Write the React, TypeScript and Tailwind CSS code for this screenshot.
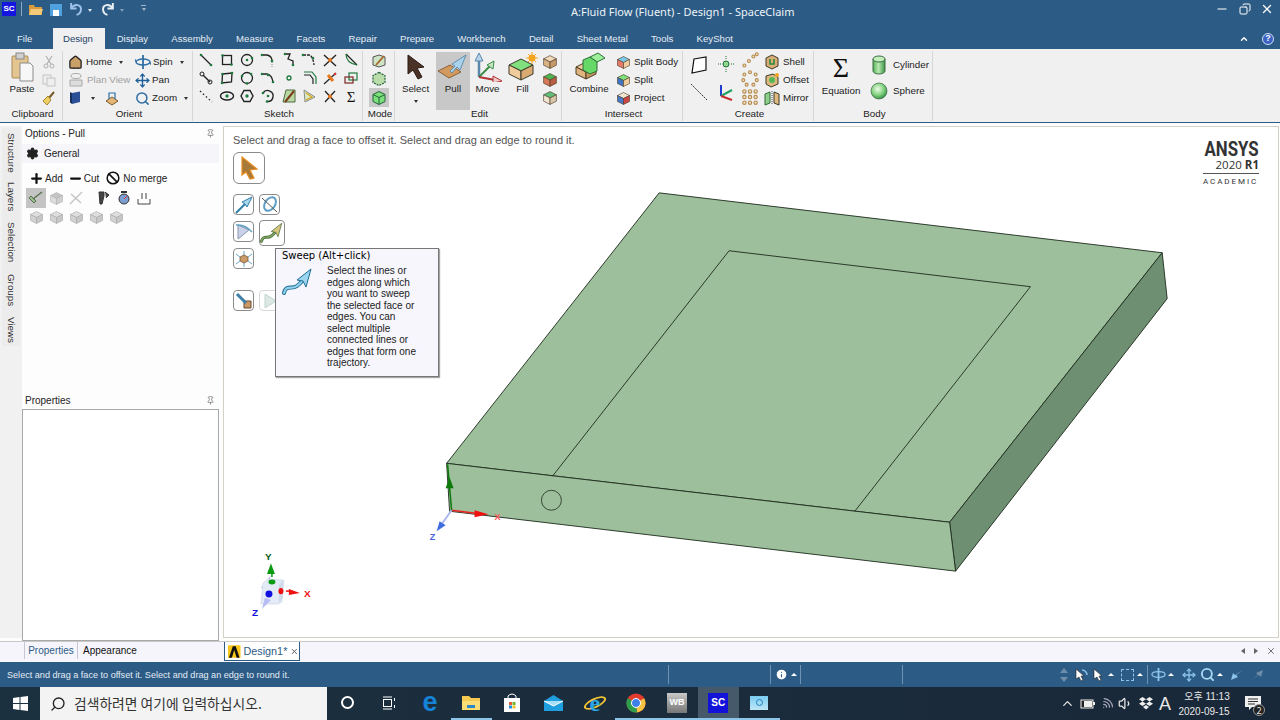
import React from 'react';
import { Search, ChevronUp, Volume1, Wifi, X, Copy, Minus, Pin, House, Move, Settings, Plus, Ban, Info } from 'lucide-react';

const tabs = ['File', 'Design', 'Display', 'Assembly', 'Measure', 'Facets', 'Repair', 'Prepare', 'Workbench', 'Detail', 'Sheet Metal', 'Tools', 'KeyShot'];

function Ico({ children, size = 16, className = '' }: { children: React.ReactNode; size?: number; className?: string }) {
  return (
    <svg width={size} height={size} viewBox="0 0 16 16" fill="none" className={'shrink-0 ' + className}>
      {children}
    </svg>
  );
}

function Dot({ x, y, c = '#1f7a3c', r = 1.3 }: { x: number; y: number; c?: string; r?: number }) {
  return <circle cx={x} cy={y} r={r} fill={c} />;
}

const K = '#222';

// sketch tool glyphs, row by row
const sketchIcons: React.ReactNode[] = [
  <><path d="M3 3L13 13" stroke={K} strokeWidth="1.3" /><Dot x={3} y={3} /><Dot x={13} y={13} /></>,
  <><rect x="3.5" y="3.5" width="9" height="9" stroke={K} strokeWidth="1.3" /><Dot x={3.5} y={3.5} /><Dot x={12.5} y={12.5} /></>,
  <><circle cx="8" cy="8" r="5.5" stroke={K} strokeWidth="1.3" /><Dot x={8} y={8} /><Dot x={13} y={6} /></>,
  <><path d="M2 3H7Q12 4 12 9" stroke={K} strokeWidth="1.3" /><path d="M12 10V15" stroke="#888" strokeDasharray="1 1" /><Dot x={2} y={3} /><Dot x={12} y={9} /></>,
  <><path d="M4 2H9L7 7L12 9V14" stroke={K} strokeWidth="1.3" /><Dot x={4} y={2} /><Dot x={12} y={13} /></>,
  <><path d="M2 3H8Q12 4 13 13" stroke={K} strokeWidth="1.3" strokeDasharray="3 1" /><Dot x={2} y={3} /><Dot x={12} y={6} /></>,
  <><path d="M2 3L14 14M14 3L2 14" stroke={K} strokeWidth="1.4" /><Dot x={8} y={8} c="#e8761c" r={2} /></>,
  <><path d="M3 2L14 13" stroke={K} strokeWidth="1.2" /><path d="M3 2Q3 11 14 13" stroke="#1f7a3c" strokeWidth="1.2" /></>,
  <><path d="M5 5L12 12" stroke={K} strokeWidth="1.4" /><circle cx="4" cy="4" r="2" stroke={K} /><circle cx="12" cy="12" r="2" stroke={K} /></>,
  <><path d="M3.5 4L13 3L12.5 12L3 13Z" stroke={K} strokeWidth="1.3" /><Dot x={3.5} y={4} /><Dot x={13} y={3} /><Dot x={3} y={13} /></>,
  <><circle cx="8" cy="8" r="5.5" stroke={K} strokeWidth="1.3" /><Dot x={3} y={6} /><Dot x={12} y={4} /><Dot x={8} y={13.5} /></>,
  <><path d="M2 4H7Q12 5 13 12" stroke={K} strokeWidth="1.3" /><Dot x={2} y={4} /><Dot x={8} y={5} /><Dot x={13} y={12} /></>,
  <><circle cx="8" cy="8" r="2" stroke="#1f7a3c" strokeWidth="1.3" /></>,
  <><path d="M3 5H9L12 9V14" stroke={K} strokeWidth="1.2" /><path d="M3 2H11L15 7V14" stroke="#1f7a3c" strokeWidth="1.2" /></>,
  <><path d="M2 14L14 3" stroke={K} strokeWidth="1.2" /><path d="M6 5L11 11" stroke="#e8761c" strokeWidth="3" /><Dot x={13} y={4} c="#d33" /></>,
  <><rect x="6" y="3" width="8" height="7" stroke="#1f7a3c" strokeWidth="1.2" /><rect x="2" y="7" width="8" height="6" stroke="#7a2424" strokeWidth="1.2" /></>,
  <><path d="M2 3L14 14" stroke={K} strokeWidth="1.3" strokeDasharray="1.5 2.5" /></>,
  <><ellipse cx="8" cy="8" rx="6.5" ry="4" stroke={K} strokeWidth="1.4" /><Dot x={8} y={8} r={1.7} /></>,
  <><path d="M5 2.5H11L14 8L11 13.5H5L2 8Z" stroke={K} strokeWidth="1.4" /><Dot x={8} y={8} r={1.7} /></>,
  <><path d="M3 5A5.5 5.5 0 1 1 7 13.5" stroke={K} strokeWidth="1.4" /><Dot x={8} y={8} /><Dot x={3} y={5} /><Dot x={7} y={13.5} /></>,
  <><path d="M2 14L5 2H14V14Z" fill="#b9d7a5" stroke="#4c6b3c" /><path d="M4 14L13 3" stroke="#7a3b1a" strokeWidth="2" /></>,
  <><path d="M3 2L14 9L4 14Z" fill="#d7e9c0" stroke="#8a8a8a" /><path d="M5 5L11 9L5 12" stroke="#d6a51f" strokeWidth="1.2" /></>,
  <><path d="M3 3L13 14M13 3L3 14" stroke={K} strokeWidth="1.3" /><Dot x={8} y={8.5} c="#e8761c" r={2} /></>,
  <text x="8" y="13.5" textAnchor="middle" fontSize="15" fontFamily="Liberation Serif, serif" fill="#111">Σ</text>,
];

function Cube({ top = '#8de08a', left = '#d9b384', right = '#c69a68', size = 20, line = '#4b3a25' }: { top?: string; left?: string; right?: string; size?: number; line?: string }) {
  return (
    <svg width={size} height={size} viewBox="0 0 20 20" className="shrink-0">
      <path d="M10 2L18 6L10 10L2 6Z" fill={top} stroke={line} strokeWidth="0.8" />
      <path d="M2 6L10 10V18L2 14Z" fill={left} stroke={line} strokeWidth="0.8" />
      <path d="M18 6L10 10V18L18 14Z" fill={right} stroke={line} strokeWidth="0.8" />
    </svg>
  );
}

function Group({ w, label, children }: { w: string; label: string; children: React.ReactNode }) {
  return (
    <div className={'flex h-[70px] shrink-0 flex-col border-r border-[#d6d6d6] ' + w}>
      <div className="flex h-[56px] flex-1 items-start">{children}</div>
      <div className="h-[14px] pl-[3px] text-center leading-[14px]">{label}</div>
    </div>
  );
}

function SmallBtn({ icon, label, muted, caret }: { icon: React.ReactNode; label?: string; muted?: boolean; caret?: boolean }) {
  return (
    <div className={'flex h-[18px] items-center gap-[3px] whitespace-nowrap ' + (muted ? 'text-[#a0a0a0]' : '')}>
      {icon}
      {label && <span>{label}</span>}
      {caret && <span className="ml-[4px] h-0 w-0 border-x-[2.5px] border-t-[3px] border-x-transparent border-t-[#333]" />}
    </div>
  );
}

function BigBtn({ icon, label, w, active, caret }: { icon: React.ReactNode; label: string; w: string; active?: boolean; caret?: boolean }) {
  return (
    <div className={'mt-[1px] flex h-[58px] flex-col items-center pt-[1px] ' + w + (active ? ' bg-[#c8c8c8]' : '')}>
      <div className="flex h-[27px] items-center">{icon}</div>
      <div className="mt-[2px] leading-[14px]">{label}</div>
      {caret && <span className="mt-[4px] h-0 w-0 border-x-[2.5px] border-t-[3px] border-x-transparent border-t-[#333]" />}
    </div>
  );
}

function PullArrow({ size = 32 }: { size?: number }) {
  return (
    <svg width={size} height={size} viewBox="0 0 32 32" className="shrink-0">
      <path d="M1 20L13 14L24 21L12 27Z" fill="#d29a5f" stroke="#7a4c22" strokeWidth="0.8" />
      <path d="M13 20L18 15L15 13L29 4L23 19L20 16L15 22Z" fill="#a9d3ec" stroke="#4d7f9f" strokeWidth="0.8" />
    </svg>
  );
}

function Ribbon() {
  return (
    <div className="flex h-[73px] items-start bg-[#f0f0f0] pt-[2px] text-[9.8px] text-[#222] [font-family:'Liberation_Sans',sans-serif]">
      <Group w="w-[63px]" label="Clipboard">
        <BigBtn
          w="w-[44px]"
          label="Paste"
          icon={
            <svg width="24" height="30" viewBox="0 0 24 30">
              <rect x="2" y="4" width="16" height="22" rx="1" fill="#e3c590" stroke="#a98a57" />
              <rect x="6" y="1" width="8" height="6" fill="#cfcfcf" stroke="#888" />
              <path d="M10 11H20L23 14V29H10Z" fill="#f7f7f7" stroke="#8b8b8b" />
            </svg>
          }
        />
        <div className="-ml-[3px] flex flex-col items-center gap-[2px] pt-[3px]">
          <Ico><path d="M5 2L10 10M11 2L6 10" stroke="#b0b0b0" strokeWidth="1.2" /><circle cx="5" cy="12" r="2" stroke="#b0b0b0" /><circle cx="11" cy="12" r="2" stroke="#b0b0b0" /></Ico>
          <Ico><rect x="2" y="3" width="8" height="9" fill="#eee" stroke="#c4c4c4" /><rect x="6" y="6" width="8" height="8" fill="#eee" stroke="#c4c4c4" /></Ico>
          <Ico><path d="M13 2L8 8" stroke="#7a5a2b" strokeWidth="2" /><path d="M2 11L7 6L10 10L6 15Z" fill="#efcf63" stroke="#a5862d" /></Ico>
        </div>
      </Group>
      <Group w="w-[130px]" label="Orient">
        <div className="flex w-[72px] flex-col pl-[5px] pt-[2px]">
          <SmallBtn icon={<House size={15} fill="#c9a068" stroke="#1c1c1c" />} label="Home" caret />
          <SmallBtn muted icon={<Ico><ellipse cx="8" cy="4" rx="5" ry="2.5" stroke="#aaa" /><path d="M2 8H14V14H2Z" fill="#ddd" stroke="#aaa" /></Ico>} label="Plan View" />
          <div className="flex h-[18px] items-center gap-[9px]">
            <Ico><path d="M4 3L12 1.5V12L4 14Z" fill="#2b4f96" /><path d="M4 3L2 2V12.5L4 14Z" fill="#16305f" /></Ico>
            <span className="-ml-[2px] h-0 w-0 border-x-[2.5px] border-t-[3px] border-x-transparent border-t-[#333]" />
            <Ico><path d="M2 11L8 7L14 11L8 15Z" fill="#e5b778" stroke="#7a5a2b" /><path d="M5 9V3H11V9" stroke="#2b6ea8" strokeWidth="1.2" /></Ico>
          </div>
        </div>
        <div className="flex flex-col pt-[2px] [&_span:first-of-type]:-ml-[1px]">
          <SmallBtn
            icon={<Ico><ellipse cx="8" cy="8" rx="7" ry="3" stroke="#2f6ea5" strokeWidth="1.4" /><path d="M8 1V15" stroke="#2f6ea5" strokeWidth="1.8" /><path d="M1 8L0 5M15 8L16 11" stroke="#2f6ea5" /></Ico>}
            label="Spin"
            caret
          />
          <SmallBtn icon={<Move size={15} stroke="#1f5f99" strokeWidth={2.2} />} label="Pan" />
          <SmallBtn icon={<Search size={15} stroke="#2f6ea5" strokeWidth={2.4} />} label="Zoom" caret />
        </div>
      </Group>
      <Group w="w-[170px]" label="Sketch">
        <div className="grid grid-cols-8 gap-x-[4.7px] gap-y-[2px] pl-[5px] pt-[1px]">
          {sketchIcons.map((g, i) => (
            <Ico key={i}>{g}</Ico>
          ))}
        </div>
      </Group>
      <Group w="w-[32px]" label="Mode">
        <div className="flex w-full flex-col items-center pt-[1px]">
          <div className="flex h-[18px] items-center">
            <Ico><path d="M2 4L8 2L14 4V12L8 14L2 12Z" fill="#cfe3c5" stroke="#555" /><path d="M5 12L13 3" stroke="#a8642a" strokeWidth="1.8" /></Ico>
          </div>
          <div className="flex h-[18px] items-center">
            <Ico><path d="M8 1.5L14 4.5V11.5L8 14.5L2 11.5V4.5Z" fill="#b9dca8" stroke="#23603a" strokeWidth="1.2" strokeDasharray="2 1" /></Ico>
          </div>
          <div className="flex h-[19px] w-[20px] items-center justify-center bg-[#c8c8c8]">
            <Ico><path d="M8 1.5L14 4.5V11.5L8 14.5L2 11.5V4.5Z" fill="#7be07a" stroke="#23603a" /><path d="M2 4.5L8 7.5L14 4.5M8 7.5V14.5" stroke="#23603a" /></Ico>
          </div>
        </div>
      </Group>
      <Group w="w-[167px]" label="Edit">
        <div className="flex items-start">
          <BigBtn
            w="w-[41px]"
            label="Select"
            caret
            icon={
              <svg width="22" height="26" viewBox="0 0 22 26">
                <path d="M3 1L19 13L12 14L17 23L13 25L8 16L3 20Z" fill="#4a3226" stroke="#2a1a12" />
              </svg>
            }
          />
          <BigBtn w="w-[34px]" active label="Pull" icon={<PullArrow />} />
          <BigBtn
            w="w-[35px]"
            label="Move"
            icon={
              <svg width="30" height="30" viewBox="0 0 30 30">
                <path d="M6 25V8" stroke="#5b87ad" strokeWidth="2.5" /><path d="M6 1L10 9H2Z" fill="#b7d4ea" stroke="#5b87ad" />
                <path d="M6 25L18 13" stroke="#3a8c46" strokeWidth="2" /><path d="M21 9L20 17L14 13Z" fill="#c7e6c2" stroke="#3a8c46" />
                <path d="M6 25L22 28" stroke="#b03434" strokeWidth="2" /><path d="M29 29L20 31L20 24Z" fill="#f0c8c8" stroke="#b03434" />
              </svg>
            }
          />
          <BigBtn
            w="w-[35px]"
            label="Fill"
            icon={
              <svg width="32" height="30" viewBox="0 0 32 30">
                <path d="M14 7L26 13L14 19L2 13Z" fill="#7fe07d" stroke="#3b3b2a" />
                <path d="M2 13L14 19V28L2 22Z" fill="#f0cc9c" stroke="#3b3b2a" />
                <path d="M26 13L14 19V28L26 22Z" fill="#d9ab72" stroke="#3b3b2a" />
                <circle cx="25" cy="6" r="3.5" fill="#f3a522" />
                <path d="M25 0V12M19 6H31M21 2L29 10M29 2L21 10" stroke="#f3a522" />
              </svg>
            }
          />
          <div className="flex flex-col gap-[2px] pl-[2px] pt-[3px]">
            <Cube size={16} top="#f0d8b8" />
            <Cube size={16} top="#4fb44f" left="#d77a5a" right="#b95f45" />
            <Cube size={16} top="#5fbf7a" left="#f2e6d2" right="#d8c6a8" />
          </div>
        </div>
      </Group>
      <Group w="w-[121px]" label="Intersect">
        <BigBtn
          w="w-[54px]"
          label="Combine"
          icon={
            <svg width="34" height="30" viewBox="0 0 34 30">
              <path d="M4 15L14 10L24 15L14 20Z" fill="#f0cc9c" stroke="#4b3a25" />
              <path d="M4 15V22L14 27V20Z" fill="#e0b47e" stroke="#4b3a25" />
              <path d="M24 15V22L14 27V20Z" fill="#c7975f" stroke="#4b3a25" />
              <path d="M18 5L26 1L33 6L25 10Z" fill="#9cf09a" stroke="#2f6d3a" />
              <path d="M11 8L18 5L25 10V19L18 22L11 18Z" fill="#66d868" stroke="#2f6d3a" />
            </svg>
          }
        />
        <div className="flex flex-col pt-[2px]">
          <SmallBtn icon={<Cube size={15} top="#7cc7e8" left="#e57a6a" right="#f0cc9c" />} label="Split Body" />
          <SmallBtn icon={<Cube size={15} top="#7de07a" left="#3f74c4" right="#f0cc9c" />} label="Split" />
          <SmallBtn icon={<Cube size={15} top="#f2e6d2" left="#4a7ac7" right="#c44" />} label="Project" />
        </div>
      </Group>
      <Group w="w-[131px]" label="Create">
        <div className="flex flex-col gap-[9px] pl-[7px] pt-[5px]">
          <svg width="18" height="18" viewBox="0 0 18 18"><path d="M4 3L16 1V14L2 17Z" fill="#fff" stroke="#111" strokeWidth="1.2" /></svg>
          <svg width="18" height="18" viewBox="0 0 18 18"><path d="M1 1L17 17" stroke="#333" strokeDasharray="2 1" /></svg>
        </div>
        <div className="flex flex-col gap-[10px] pl-[9px] pt-[4px]">
          <svg width="18" height="18" viewBox="0 0 18 18"><circle cx="9" cy="9" r="3" fill="#8dd68a" stroke="#1f6d3a" /><path d="M9 1V4M9 14V17M1 9H4M14 9H17" stroke="#1f6d3a" strokeDasharray="1 1" /></svg>
          <svg width="18" height="18" viewBox="0 0 18 18"><path d="M4 13V2" stroke="#1d3fd0" strokeWidth="2" /><path d="M4 13L15 7" stroke="#1fa060" strokeWidth="2" /><path d="M4 13L15 17" stroke="#c92c2c" strokeWidth="2" /></svg>
        </div>
        <div className="flex flex-col pl-[6px] pt-[1px]">
          <Ico size={18}>
            {[[3, 12], [7, 8], [11, 4], [14, 2]].map(([x, y]) => <circle key={x} cx={x} cy={y} r="1.3" stroke="#b58b4f" fill="#f0e0c0" />)}
          </Ico>
          <Ico size={18}>
            {[[8, 2], [13, 4], [14, 9], [11, 13], [5, 13], [2, 9], [3, 4]].map(([x, y]) => <circle key={x * 10 + y} cx={x} cy={y} r="1.3" stroke="#b58b4f" fill="#f0e0c0" />)}
          </Ico>
          <Ico size={18}>
            {[3, 8, 13].flatMap((y) => [3, 8, 13].map((x) => <circle key={x * 10 + y} cx={x} cy={y} r="1.5" stroke="#b58b4f" fill="#f0e0c0" />))}
          </Ico>
        </div>
        <div className="flex flex-col pl-[5px] pt-[2px]">
          <SmallBtn icon={<Ico><path d="M8 1L14 4V12L8 15L2 12V4Z" fill="#d8ae74" stroke="#3a3a2a" /><path d="M6 5V10H10V5" stroke="#2f8a3f" strokeWidth="1.6" /></Ico>} label="Shell" />
          <SmallBtn icon={<Ico><path d="M2 4L9 2L14 5V12L7 15L2 12Z" fill="#e0b97f" stroke="#3a3a2a" /><circle cx="8" cy="8" r="3" fill="#54b85a" /><circle cx="13" cy="3" r="2" fill="#f3a522" /></Ico>} label="Offset" />
          <SmallBtn icon={<Ico><path d="M1 4L6 2V13L1 15Z" fill="#8fcf8a" stroke="#2f6d3a" /><path d="M15 4L10 2V13L15 15Z" fill="#e0b97f" stroke="#3a3a2a" /><path d="M8 1V15" stroke="#444" strokeDasharray="1 1" /></Ico>} label="Mirror" />
        </div>
      </Group>
      <Group w="w-[119px]" label="Body">
        <div className="flex w-[54px] flex-col items-center">
          <div className="flex h-[33px] items-center font-['Liberation_Serif',serif] text-[28px] leading-none text-[#111]">Σ</div>
          <div className="leading-[14px]">Equation</div>
        </div>
        <div className="flex flex-col gap-[6px] pl-[2px] pt-[4px]">
          <div className="flex h-[20px] items-center gap-[5px]">
            <svg width="18" height="20" viewBox="0 0 18 20">
              <defs><linearGradient id="cyl" x1="0" x2="1" y1="0" y2="0"><stop offset="0" stopColor="#4fae55" /><stop offset="0.45" stopColor="#b8eab0" /><stop offset="1" stopColor="#3f9347" /></linearGradient></defs>
              <path d="M3 4V16A6 3 0 0 0 15 16V4Z" fill="url(#cyl)" stroke="#3d6b45" />
              <ellipse cx="9" cy="4" rx="6" ry="3" fill="#c3efbb" stroke="#3d6b45" />
            </svg>
            <span>Cylinder</span>
          </div>
          <div className="flex h-[20px] items-center gap-[5px]">
            <svg width="18" height="20" viewBox="0 0 18 20">
              <defs><radialGradient id="sph" cx="0.42" cy="0.38" r="0.65"><stop offset="0" stopColor="#eefbe8" /><stop offset="0.6" stopColor="#7fd07c" /><stop offset="1" stopColor="#2f8a3f" /></radialGradient></defs>
              <circle cx="9" cy="10" r="8" fill="url(#sph)" stroke="#3d6b45" strokeWidth="0.7" />
            </svg>
            <span>Sphere</span>
          </div>
        </div>
      </Group>
    </div>
  );
}

function GuideBtn({ children, className = 'h-[21px] w-[21px]' }: { children: React.ReactNode; className?: string }) {
  return <div className={'flex items-center justify-center rounded-[4px] border border-[#8b8b8b] bg-white ' + className}>{children}</div>;
}

function BlueArrow({ size = 18, fill = '#a9d8ee', stroke = '#2f7ea8' }: { size?: number; fill?: string; stroke?: string }) {
  return (
    <svg width={size} height={size} viewBox="0 0 18 18">
      <path d="M1 17L10 8" stroke={stroke} strokeWidth="2" />
      <path d="M17 1L12 11L10 8L7 6Z" fill={fill} stroke={stroke} />
    </svg>
  );
}

function SweepIcon({ size = 24, body = '#7aa35f', head = '#d9c780', line = '#4a6a3a' }: { size?: number; body?: string; head?: string; line?: string }) {
  return (
    <svg width={size} height={size} viewBox="0 0 32 32">
      <path d="M2 27C4 18 10 24 15 20C19 17 19 16 21 14" fill="none" stroke={line} strokeWidth="4" strokeLinecap="round" />
      <path d="M2 27C4 18 10 24 15 20C19 17 19 16 21 14" fill="none" stroke={body} strokeWidth="2.2" strokeLinecap="round" />
      <path d="M29 3L24 21L21 15L15 14Z" fill={head} stroke={line} />
    </svg>
  );
}

function Model() {
  // free canvas: coordinates are the screen ones
  return (
    <svg viewBox="224 126 1054 511" className="absolute inset-0 h-full w-full">
      <polygon points="659,192 1163,252 950,522 446,463" fill="#9dbf9b" stroke="#1d2b1d" strokeWidth="0.9" />
      <polygon points="1163,252 1168,298 956,571 950,522" fill="#6e8f71" stroke="#1d2b1d" strokeWidth="0.9" />
      <polygon points="446,463 950,522 956,571 449,511" fill="#9dbf9b" stroke="#1d2b1d" strokeWidth="0.9" />
      <polyline points="552,476 729,250 1031,286 855,511" fill="none" stroke="#1d2b1d" strokeWidth="0.9" />
      <circle cx="551" cy="500" r="10" fill="none" stroke="#1d2b1d" strokeWidth="0.8" />
      <path d="M447 464L451 510" stroke="#0b7a0b" strokeWidth="1.5" />
      <path d="M449 477L445 488H453Z" fill="#0b7a0b" />
      <path d="M451 510L475 513" stroke="#e22" strokeWidth="1.5" />
      <path d="M488 514L474 510V517Z" fill="#e11" />
      <text x="494" y="520" fontSize="9" fill="#f55" fontFamily="Liberation Sans, sans-serif" fontWeight="700">X</text>
      <path d="M451 510L441 524" stroke="#a9b8f0" strokeWidth="2" />
      <path d="M436 531L439 521L445 525Z" fill="#3f6de0" />
      <text x="429" y="540" fontSize="9" fill="#4a63d8" fontFamily="Liberation Sans, sans-serif" fontWeight="700">Z</text>

      <path d="M270 575L260 588H267Z" fill="#b8bcf5" />
      <path d="M270 563L266 574H274Z" fill="#0a9a10" />
      <path d="M271 572V577" stroke="#0a9a10" strokeWidth="1.5" />
      <path d="M260 604L262 583L267 579L283 580L281 602L277 604Z" fill="#e2ebf6" stroke="#c9d4e6" strokeWidth="0.6" />
      <path d="M278 585L282 580V598L278 603Z" fill="#cfdaea" />
      <path d="M261 609L270 600L264 598Z" fill="#b8bcf5" />
      <ellipse cx="271" cy="582" rx="3.5" ry="2.5" fill="#0a9a10" />
      <circle cx="268" cy="594" r="3.5" fill="#1010e0" />
      <ellipse cx="280" cy="591" rx="2.5" ry="3.2" fill="#ee1111" />
      <path d="M285 591H290" stroke="#e11" strokeWidth="1.5" />
      <path d="M299 593L288 589V595Z" fill="#e11" />
      <text x="303" y="597" fontSize="10" fill="#e11" fontFamily="Liberation Sans, sans-serif" fontWeight="700">X</text>
      <text x="264" y="560" fontSize="10" fill="#065c14" fontFamily="Liberation Sans, sans-serif" fontWeight="700">Y</text>
      <text x="251" y="616" fontSize="10" fill="#1010e0" fontFamily="Liberation Sans, sans-serif" fontWeight="700">Z</text>
    </svg>
  );
}

function Canvas() {
  return (
    <div className="relative flex-1 border border-[#d5d0c4] bg-white">
      <Model />
      <div className="relative pl-[9px] pt-[5px] text-[11px] text-[#555] [font-family:'Liberation_Sans',sans-serif]">
        Select and drag a face to offset it. Select and drag an edge to round it.
      </div>
      {/* tool guides */}
      <div className="absolute left-[9px] top-[25px] flex flex-col">
        <GuideBtn className="h-[32px] w-[32px] rounded-[6px]">
          <svg width="22" height="24" viewBox="0 0 22 24">
            <path d="M4 1L19 13L12 14L16 22L12 23L8 16L4 19Z" fill="#a87a3a" stroke="#e78c1f" strokeWidth="1.2" />
          </svg>
        </GuideBtn>
        <div className="mt-[10px] flex gap-[5px]">
          <GuideBtn><BlueArrow /></GuideBtn>
          <GuideBtn>
            <svg width="19" height="19" viewBox="0 0 19 19">
              <ellipse cx="10" cy="9" rx="5" ry="7.5" transform="rotate(35 10 9)" fill="none" stroke="#5f9fc4" strokeWidth="2" />
              <path d="M2 3L17 17" stroke="#555" />
            </svg>
          </GuideBtn>
        </div>
        <div className="mt-[6px] flex items-start gap-[5px]">
          <GuideBtn>
            <svg width="18" height="18" viewBox="0 0 18 18">
              <path d="M3 2V16L14 7Z" fill="#c9d2e8" stroke="#8a96ad" />
              <path d="M1 2Q10 1 17 9" fill="none" stroke="#5f9fc4" strokeWidth="1.5" />
            </svg>
          </GuideBtn>
          <GuideBtn className="h-[26px] w-[26px] -translate-y-[1px]"><SweepIcon /></GuideBtn>
        </div>
        <div className="mt-[1px] flex">
          <GuideBtn>
            <svg width="18" height="18" viewBox="0 0 18 18">
              <path d="M9 1V5M9 13V17M1 4L5 7M17 4L13 7M1 14L5 11M17 14L13 11" stroke="#6aa9cc" />
              <path d="M9 5L13 7V11L9 13L5 11V7Z" fill="#c99a68" stroke="#6b4b2a" strokeWidth="0.7" />
            </svg>
          </GuideBtn>
        </div>
        <div className="mt-[21px] flex gap-[5px]">
          <GuideBtn>
            <svg width="18" height="18" viewBox="0 0 18 18">
              <path d="M9 9H16V16H9Z" fill="#c99a68" stroke="#6b4b2a" />
              <path d="M2 2L11 11" stroke="#3d7fa8" strokeWidth="3" />
            </svg>
          </GuideBtn>
          <GuideBtn className="h-[21px] w-[21px] border-[#d8d8d8]">
            <svg width="14" height="16" viewBox="0 0 14 16"><path d="M2 1L13 8L2 15Z" fill="#dbe8e4" stroke="#c4d4d0" /></svg>
          </GuideBtn>
        </div>
      </div>
      {/* tooltip */}
      <div className="absolute left-[51px] top-[121px] h-[129px] w-[164px] border border-[#767676] bg-[#f6f6fc] pl-[6px] text-[#222] shadow-[1px_1px_1px_rgba(0,0,0,0.35)]">
        <div className="h-[14px] text-[10px] leading-[13px] text-black [font-family:'DejaVu_Sans',sans-serif]">Sweep (Alt+click)</div>
        <div className="flex">
          <div className="w-[45px] pt-[3px]"><SweepIcon size={32} body="#8fd0ea" head="#9bd6ee" line="#1f6d94" /></div>
          <div className="w-[90px] pt-[2px] text-[10px] leading-[11.5px] [font-family:'Liberation_Sans',sans-serif]">
            Select the lines or edges along which you want to sweep the selected face or edges. You can select multiple connected lines or edges that form one trajectory.
          </div>
        </div>
      </div>
      {/* ansys mark */}
      <div className="absolute right-[19px] top-[14px] flex w-[56px] flex-col items-end text-[#333]">
        <div className="origin-right scale-x-[0.8] text-[21px] font-bold leading-[17px] [font-family:'Roboto',sans-serif]">ANSYS</div>
        <div className="text-[11.5px] leading-[13px] [font-family:'Open_Sans',sans-serif]">2020 <span className="font-bold">R1</span></div>
        <div className="mt-[2px] w-full border-t border-[#555] pt-[3px] text-[8px] leading-[10px] tracking-[0.24em] [font-family:'Roboto',sans-serif]">ACADEMIC</div>
      </div>
    </div>
  );
}

function Sidebar() {
  const grey = '#c4c4c4';
  return (
    <div className="-mb-[3px] flex w-[197px] flex-col text-[10px] text-[#222] [font-family:'Liberation_Sans',sans-serif]">
      <div className="flex h-[15px] items-center justify-between pl-[3px] pr-[4px]">
        <span>Options - Pull</span>
        <Pin size={9} stroke="#777" />
      </div>
      <div className="mt-[3px] flex h-[19px] items-center gap-[5px] bg-[#f5f5fa] pl-[4px]">
        <Settings size={13} fill="#222" stroke="#222" />
        <span>General</span>
      </div>
      <div className="mt-[6px] flex h-[18px] items-center pl-[7px]">
        <Plus size={15} strokeWidth={3.6} stroke="#111" />
        <span className="ml-[1px]">Add</span>
        <Minus size={15} strokeWidth={3.6} stroke="#111" className="ml-[5px]" />
        <span className="ml-[1px]">Cut</span>
        <Ban size={14} strokeWidth={2.6} stroke="#111" className="ml-[7px]" />
        <span className="ml-[3px]">No merge</span>
      </div>
      <div className="mt-[1px] flex items-center pl-[4px]">
        <div className="flex h-[20px] w-[20px] items-center justify-center bg-[#c4c4c4]">
          <Ico><path d="M3 6L8 11L6 13L1 8Z" fill="#9cbd8e" stroke="#5a6f4f" /><path d="M5 9L14 2" stroke="#5a6f4f" strokeWidth="1.5" /></Ico>
        </div>
        <div className="flex w-[20px] justify-center"><Cube size={15} top={grey} left="#dcdcdc" right="#cfcfcf" line="#b0b0b0" /></div>
        <div className="flex w-[20px] justify-center"><Ico><path d="M2 14L14 2M3 4L13 13" stroke={grey} strokeWidth="1.4" /></Ico></div>
        <div className="ml-[8px] flex w-[20px] justify-center"><Ico><path d="M3 2H8V6L6 14H4ZM9 2L13 5L10 8" fill="#444" stroke="#333" /></Ico></div>
        <div className="flex w-[20px] justify-center"><Ico><circle cx="8" cy="9" r="5" fill="#7a9fd0" stroke="#333" /><path d="M5 2H11" stroke="#333" strokeWidth="2" /><path d="M8 9L11 6" stroke="#d33" /></Ico></div>
        <div className="flex w-[20px] justify-center"><Ico><path d="M2 14H14M2 9V14M14 9V14M6 3V9M10 3V9" stroke="#444" /></Ico></div>
      </div>
      <div className="flex items-center pl-[4px]">
        {[0, 1, 2, 3, 4].map((i) => (
          <div key={i} className="flex h-[19px] w-[20px] items-center justify-center">
            <Cube size={15} top="#dedede" left="#d2d2d2" right="#c6c6c6" line="#a8a8a8" />
          </div>
        ))}
      </div>
      <div className="mt-[164px] flex h-[18px] items-center justify-between pl-[3px] pr-[4px]">
        <span>Properties</span>
        <Pin size={9} stroke="#777" />
      </div>
      <div className="flex-1 border border-[#a9a9a9] bg-white" />
    </div>
  );
}

function Task({ children, active, lit }: { children: React.ReactNode; active?: boolean; lit?: boolean }) {
  return (
    <div className={'flex h-full w-[41.2px] items-center justify-center border-b-[2px] ' + (active ? 'bg-[#46596a] ' : '') + (lit ? 'border-[#8cc4ea]' : 'border-transparent')}>
      {children}
    </div>
  );
}

function Taskbar() {
  return (
    <div className="flex h-[33px] items-stretch bg-gradient-to-r from-[#1b3140] via-[#1b2c3c] to-[#192838] text-white">
      <div className="flex w-[40px] items-center justify-center">
        <svg width="15" height="15" viewBox="0 0 15 15" fill="#fff"><path d="M0 2L6.5 1V7H0ZM7.5 1L15 0V7H7.5ZM0 8H6.5V14L0 13ZM7.5 8H15V15L7.5 14Z" /></svg>
      </div>
      <div className="flex w-[287px] items-center gap-[8px] bg-[#f3f3f3] pl-[10px] text-[13.8px] text-[#333] [font-family:'Noto_Sans_CJK_KR',sans-serif]">
        <Search size={16} stroke="#222" className="-scale-x-100" />
        <span>검색하려면 여기에 입력하십시오.</span>
      </div>
      <Task><div className="h-[13px] w-[13px] rounded-full border-[2px] border-white" /></Task>
      <Task>
        <svg width="16" height="14" viewBox="0 0 16 14" fill="none" stroke="#fff"><rect x="2.5" y="3.5" width="8" height="7" /><path d="M2 1H11M2 13H11M13.5 2V5M13.5 9V12" /></svg>
      </Task>
      <Task><span className="text-[27px] font-bold leading-none text-[#1583d8] [font-family:'Liberation_Sans',sans-serif]">e</span></Task>
      <Task lit>
        <svg width="20" height="18" viewBox="0 0 20 18"><path d="M1 2H8L10 4H19V16H1Z" fill="#f3c94f" /><rect x="1" y="7" width="18" height="9" fill="#fbdc75" /><rect x="6" y="11" width="8" height="3" fill="#2f84c8" /></svg>
      </Task>
      <Task>
        <svg width="18" height="20" viewBox="0 0 18 20"><path d="M1 5H17V19H1Z" fill="#fff" /><path d="M5 6V3Q9 -1 13 3V6" fill="none" stroke="#fff" /><rect x="6" y="9" width="3" height="3" fill="#e85a2a" /><rect x="9.5" y="9" width="3" height="3" fill="#6bb82a" /><rect x="6" y="12.5" width="3" height="3" fill="#1b8fe0" /><rect x="9.5" y="12.5" width="3" height="3" fill="#f3c02a" /></svg>
      </Task>
      <Task>
        <svg width="21" height="18" viewBox="0 0 21 18"><path d="M1 7L10.5 1L20 7V17H1Z" fill="#1f9fe0" /><path d="M1 7L10.5 12L20 7" fill="#a9e0f8" stroke="#fff" /></svg>
      </Task>
      <Task>
        <span className="relative flex h-[22px] w-[22px] items-center justify-center">
          <span className="absolute h-[10px] w-[24px] -rotate-[25deg] rounded-[50%] border-[2px] border-[#f1c232]" />
          <span className="relative text-[24px] font-bold leading-none text-[#2aa6e8] [font-family:'Liberation_Serif',serif]">e</span>
        </span>
      </Task>
      <Task lit>
        <svg width="20" height="20" viewBox="0 0 20 20">
          <circle cx="10" cy="10" r="9.5" fill="#e33b2e" />
          <path d="M10 10L18.2 5.2A9.5 9.5 0 0 1 11 19.5Z" fill="#f6c342" />
          <path d="M10 10L11 19.5A9.5 9.5 0 0 1 1.8 5.2Z" fill="#2f9e4b" />
          <circle cx="10" cy="10" r="4.5" fill="#3f80e8" stroke="#fff" />
        </svg>
      </Task>
      <Task lit>
        <div className="flex h-[20px] w-[20px] items-center justify-center bg-gradient-to-b from-[#c9c9c9] to-[#777] text-[9px] font-bold text-white [font-family:'Liberation_Sans',sans-serif]">WB</div>
      </Task>
      <Task active lit>
        <div className="flex h-[20px] w-[20px] items-center justify-center bg-[#1212d8] text-[10px] font-bold text-white [font-family:'Liberation_Sans',sans-serif]">SC</div>
      </Task>
      <Task lit>
        <div className="flex h-[14px] w-[18px] items-center justify-center bg-gradient-to-b from-[#79cdf0] to-[#bfe6f6]"><div className="h-[7px] w-[7px] rounded-full border border-[#1f7fbf]" /></div>
      </Task>
      <div className="ml-auto flex items-center pr-[19px] text-[#e8e8e8]">
        <ChevronUp size={15} className="mr-[5px]" />
        <svg width="15" height="11" viewBox="0 0 15 11" className="mr-[5px]"><rect x="1" y="2" width="12" height="8" fill="#222" stroke="#eee" /><rect x="4" y="3" width="8" height="6" fill="#eee" /><rect x="13" y="4" width="2" height="3" fill="#eee" /></svg>
        <Wifi size={14} className="mr-[4px] rotate-45 text-[#aab]" />
        <Volume1 size={15} className="mr-[6px]" />
        <svg width="14" height="13" viewBox="0 0 14 13" fill="#eee" className="mr-[6px]"><path d="M3.5 0L7 2.2L3.5 4.5L0 2.2ZM10.5 0L14 2.2L10.5 4.5L7 2.2ZM3.5 4.5L7 6.8L3.5 9L0 6.8ZM10.5 4.5L14 6.8L10.5 9L7 6.8ZM7 8L10 10L7 12.5L4 10Z" /></svg>
        <span className="mr-[8px] text-[18px] leading-none [font-family:'Liberation_Sans',sans-serif]">A</span>
        <div className="mr-[16px] flex w-[50px] flex-col items-center whitespace-nowrap pt-[1px] text-[10px] leading-[15px] [font-family:'Liberation_Sans','Noto_Sans_CJK_KR',sans-serif]">
          <span className="pl-[6px]">오후 11:13</span>
          <span>2020-09-15</span>
        </div>
        <div className="relative">
          <svg width="16" height="15" viewBox="0 0 16 15"><path d="M0 0H16V11H7L4 14V11H0Z" fill="#f0f0f0" /><path d="M3 3H13M3 5.5H13M3 8H10" stroke="#333" /></svg>
          <span className="absolute -bottom-[5px] -right-[4px] flex h-[12px] w-[12px] items-center justify-center rounded-full border border-[#999] bg-[#222] text-[9px] leading-none">2</span>
        </div>
      </div>
    </div>
  );
}

export default function App() {
  return (
    <div className="flex h-[720px] w-[1280px] flex-col overflow-hidden bg-[#fdfdfd]">
      {/* title + tabs */}
      <div className="h-[49px] bg-[#2c5b85]">
        <div className="relative flex h-[28px] items-start pl-[2px] pt-[2px]">
          <div className="flex h-[14px] w-[14px] items-center justify-center bg-[#1515e0] text-[8px] font-bold text-white [font-family:'Liberation_Sans',sans-serif]">SC</div>
          <div className="ml-[5px] h-[14px] border-l border-[#8fa9c2]" />
          <svg width="14" height="12" viewBox="0 0 14 12" className="ml-[7px] mt-[2px]"><path d="M0 1H5L6 3H13V11H0Z" fill="#d89b3e" /><path d="M2 5H14L12 11H0Z" fill="#f3c877" /></svg>
          <svg width="12" height="12" viewBox="0 0 12 12" className="ml-[7px] mt-[2px]"><rect width="12" height="12" fill="#4ea1de" /><rect x="3" y="6" width="6" height="6" fill="#fff" /></svg>
          <svg width="14" height="14" viewBox="0 0 13 13" fill="none" stroke="#9fc3e8" strokeWidth="1.8" className="ml-[7px]"><path d="M2 1V6H7" /><path d="M2 6C5 1 12 2 11 8C10.6 10 9 11.5 7 12" /></svg>
          <span className="ml-[5px] mt-[7px] h-0 w-0 border-x-[2px] border-t-[3px] border-x-transparent border-t-[#dfe8f0]" />
          <svg width="14" height="14" viewBox="0 0 13 13" fill="none" stroke="#e8eef4" strokeWidth="1.8" className="ml-[9px]"><path d="M11 1V6H6" /><path d="M11 6C8 1 1 2 2 8C2.4 10 4 11.5 6 12" /></svg>
          <span className="ml-[5px] mt-[7px] h-0 w-0 border-x-[2px] border-t-[3px] border-x-transparent border-t-[#7f9cb8]" />
          <div className="ml-[17px] mt-[3px] flex flex-col items-center gap-[2px]">
            <div className="h-[1px] w-[5px] bg-[#9fb6cc]" />
            <div className="h-0 w-0 border-x-[2.5px] border-t-[3px] border-x-transparent border-t-[#9fb6cc]" />
          </div>
          <div className="absolute left-[571px] top-[4px] text-[11px] leading-[16px] text-[#eef3f8] [font-family:'Noto_Sans',sans-serif]">
            A:Fluid Flow (Fluent) - Design1 - SpaceClaim
          </div>
          <div className="ml-auto flex items-center gap-[9.5px] pr-[6px] text-white">
            <Minus size={14} strokeWidth={2} />
            <Copy size={12} strokeWidth={2} className="-scale-x-100" />
            <X size={14} strokeWidth={2.2} />
          </div>
        </div>
        <div className="flex h-[21px] items-stretch pl-[5.4px] text-[9.6px] text-[#e6edf4] [font-family:'Liberation_Sans',sans-serif]">
          {tabs.map((t) => (
            <div
              key={t}
              className={
                t === 'Design'
                  ? 'ml-[9px] flex w-[52px] items-center bg-[#f0f0f0] pl-[10px] pt-[2px] text-[#1d4466]'
                  : 'flex items-center px-[11.6px] pt-[2px]'
              }
            >
              {t}
            </div>
          ))}
          <div className="ml-auto flex items-center gap-[13px] pr-[6px]">
            <ChevronUp size={10} strokeWidth={3.4} stroke="#fff" />
            <div className="flex h-[12px] w-[12px] items-center justify-center rounded-full border border-[#cfe0f2] bg-[#3b62c4] text-[9px] font-bold leading-none text-white">?</div>
          </div>
        </div>
      </div>

      <Ribbon />
      <div className="h-[1px] bg-[#2c5b85]" />

      {/* work area */}
      <div className="flex flex-1 flex-col">
        <div className="flex flex-1 pr-[1px] pt-[3px]">
          <div className="flex w-[22px] flex-col bg-[#f1f1f1] pl-[2px] pt-[2px] text-[9.8px] text-[#333] [font-family:'Liberation_Sans',sans-serif]">
            {[
              ['Structure', 'h-[49px]'],
              ['Layers', 'h-[40px]'],
              ['Selection', 'h-[52px]'],
              ['Groups', 'h-[43px]'],
              ['Views', 'h-[34px]'],
            ].map(([t, h]) => (
              <div key={t} className={'flex w-[18px] items-start justify-center bg-[#ececec] pt-[5px] ' + h}>
                <span className="[writing-mode:vertical-rl]">{t}</span>
              </div>
            ))}
          </div>
          <Sidebar />
          <div className="w-[4px]" />
          <Canvas />
        </div>
        <div className="mt-[3px] h-[1px] bg-[#c9c9c9]" />
        <div className="flex h-[20px] items-stretch bg-[#f5f5fb] text-[10px] text-[#222] [font-family:'Liberation_Sans',sans-serif]">
          <div className="flex w-[224px] pb-[3px] pl-[24px]">
            <div className="flex w-[54px] items-center justify-center border-x border-[#c4c8d0] text-[#2f5c87]">Properties</div>
            <div className="flex items-center pl-[5px] text-[#111]">Appearance</div>
          </div>
          <div className="flex h-[19px] w-[76px] items-center gap-[3px] border-x border-b border-[#2c5b85] bg-white pl-[3px] text-[#2c5b85]">
            <svg width="13" height="13" viewBox="0 0 13 13"><rect width="13" height="13" fill="#f7c51e" /><path d="M1 13L5 1H8L12 13H9L6.5 5L4 13Z" fill="#111" /></svg>
            <span className="text-[10.8px]">Design1*</span>
            <X size={9} strokeWidth={2.6} stroke="#555" />
          </div>
          <div className="ml-auto flex items-center gap-[5px] pb-[2px] pr-[4px] text-[#555]">
            <span className="h-0 w-0 border-y-[3px] border-r-[4px] border-y-transparent border-r-[#666]" />
            <span className="ml-[4px] h-0 w-0 border-y-[3px] border-l-[4px] border-y-transparent border-l-[#666]" />
            <X size={10} className="ml-[3px]" />
          </div>
        </div>
      </div>

      {/* status bar */}
      <div className="relative flex h-[25px] items-center bg-[#2c5b85] pl-[7px] text-[9.1px] text-[#e4ecf3] [font-family:'Liberation_Sans',sans-serif]">
        <span className="pt-[2px]">Select and drag a face to offset it. Select and drag an edge to round it.</span>
        <div className="absolute left-[668px] top-[3px] h-[19px] w-[133px] border-x border-[#6f92b2]" />
        <div className="absolute left-[770px] top-[3px] h-[19px] w-[133px] border-x border-[#6f92b2]" />
        <div className="ml-auto mr-[16px] flex items-center">
          <span className="mr-[263px] flex items-center gap-[3px]">
            <Info size={13} fill="#fff" stroke="#2c5b85" />
            <span className="h-0 w-0 border-x-[3px] border-b-[3px] border-x-transparent border-b-white" />
          </span>
          <div className="mr-[6px] flex flex-col gap-[4px]">
            <span className="block h-0 w-0 border-x-[4px] border-b-[5px] border-x-transparent border-b-[#6f8ca8]" />
            <span className="block h-0 w-0 border-x-[4px] border-t-[5px] border-x-transparent border-t-[#6f8ca8]" />
          </div>
          <svg width="14" height="14" viewBox="0 0 14 14" className="mr-[5px]"><path d="M2 1L2 11L5 9L7 13L9 12L7 8L10 8Z" fill="#fff" stroke="#222" strokeWidth="0.6" /><path d="M8 2A5 5 0 0 1 13 7" fill="none" stroke="#8cc4ea" strokeWidth="1.5" /></svg>
          <svg width="10" height="14" viewBox="0 0 10 14" className="mr-[5px]"><path d="M1 1V11L4 9L6 13L8 12L6 8L9 8Z" fill="#fff" stroke="#222" strokeWidth="0.6" /></svg>
          <span className="mr-[7px] h-0 w-0 border-x-[3px] border-b-[3px] border-x-transparent border-b-white" />
          <div className="mr-[3px] h-[12px] w-[13px] border-[1.5px] border-dashed border-[#8cc4ea]" />
          <span className="mr-[4px] h-0 w-0 border-x-[3px] border-b-[3px] border-x-transparent border-b-white" />
          <div className="mr-[3px] h-[19px] border-l border-[#6f92b2]" />
          <svg width="15" height="15" viewBox="0 0 16 16" fill="none" className="mr-[2px]"><ellipse cx="8" cy="8" rx="7" ry="3" stroke="#8cc4ea" strokeWidth="1.4" /><path d="M8 1V15" stroke="#8cc4ea" strokeWidth="2" /></svg>
          <span className="mr-[8px] h-0 w-0 border-x-[3px] border-b-[3px] border-x-transparent border-b-white" />
          <Move size={14} stroke="#8cc4ea" strokeWidth={2.2} className="mr-[4px]" />
          <Search size={15} stroke="#a9d8f2" strokeWidth={3} className="mr-[2px]" />
          <span className="mr-[7px] h-0 w-0 border-x-[3px] border-b-[3px] border-x-transparent border-b-white" />
          <svg width="14" height="12" viewBox="0 0 14 12" className="mr-[6px]"><path d="M13 1L6 6L8 8L1 11L3 4L5 6Z" fill="#8cc4ea" /></svg>
          <svg width="14" height="12" viewBox="0 0 14 12"><path d="M1 11L8 6L6 4L13 1L11 8L9 6Z" fill="#6f8ca8" /></svg>
        </div>
      </div>
      <Taskbar />
    </div>
  );
}
